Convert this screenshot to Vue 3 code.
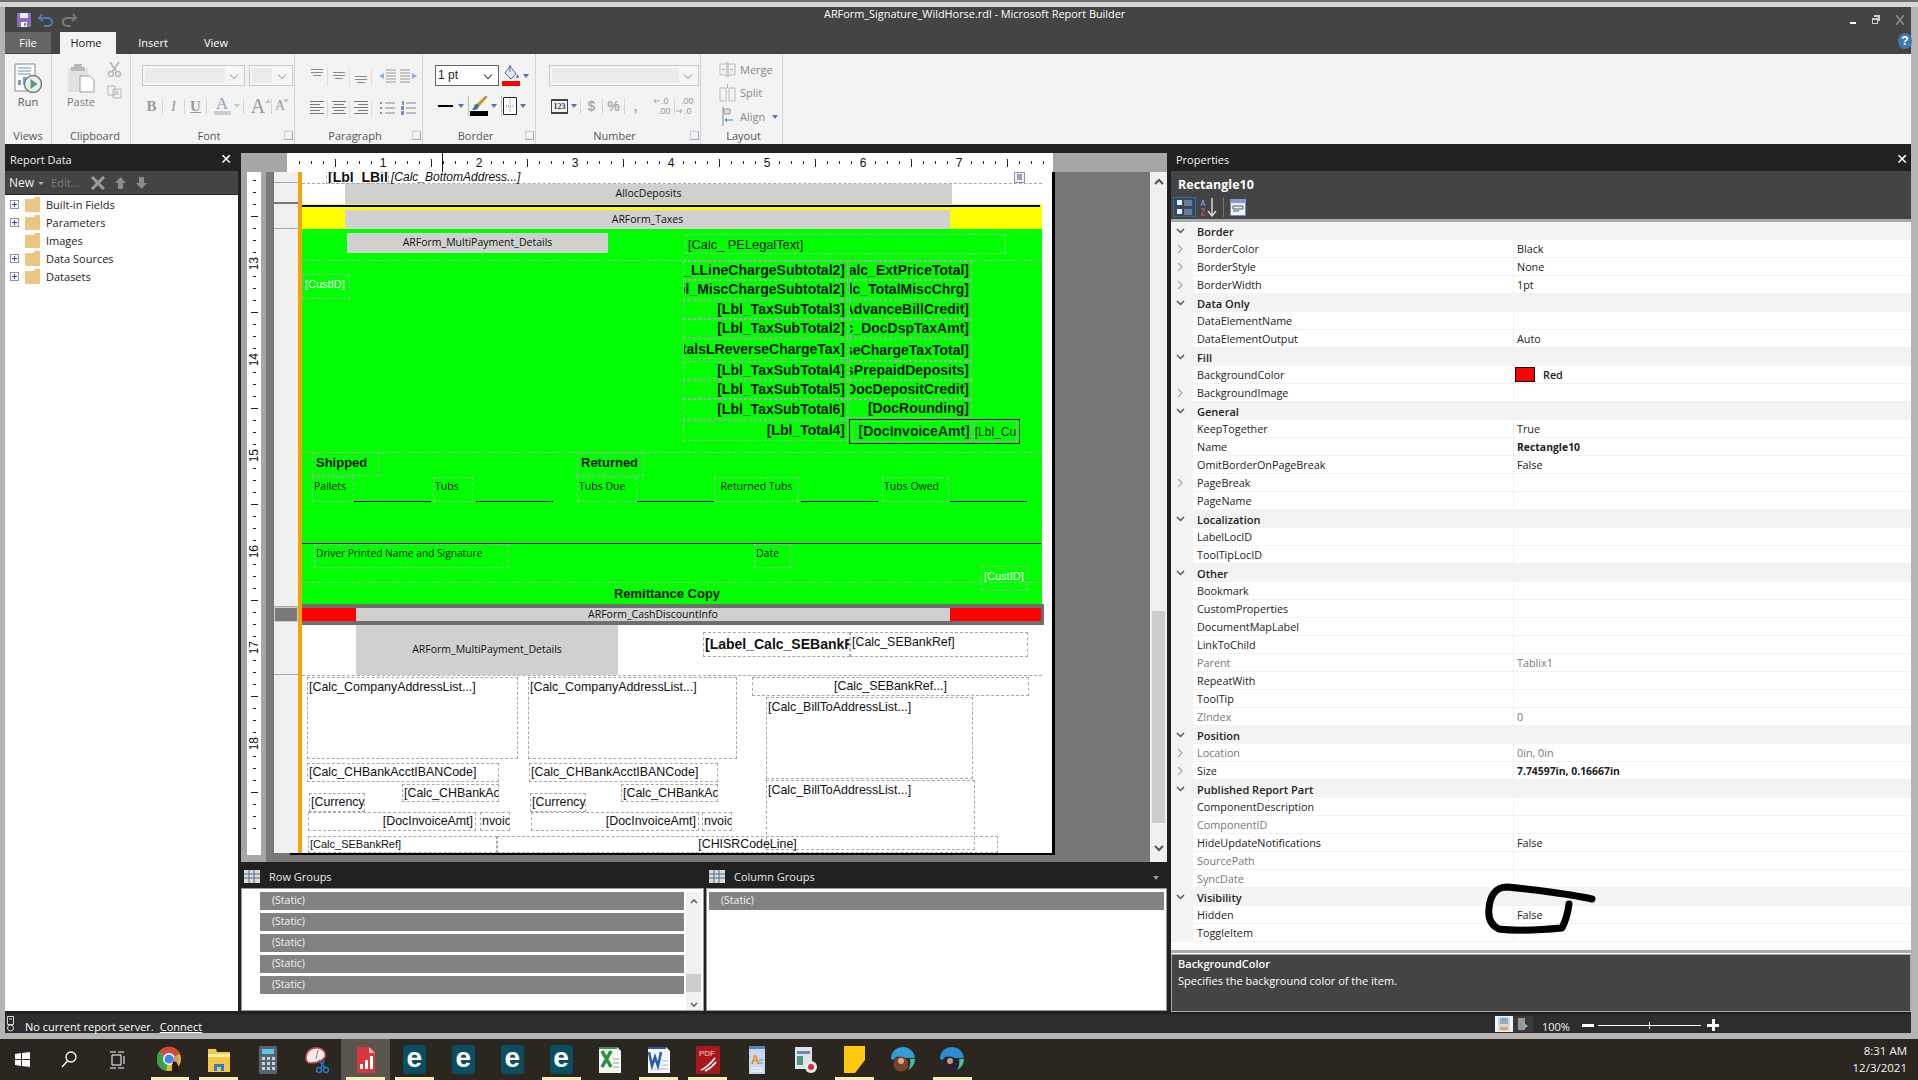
<script setup>
const ORIGIN_X = 302
const ORIGIN_Y = 172

const hTicks = Array.from({ length: 63 }, (_, i) => {
  const k = i + 1
  return { k, label: k % 8 === 0 ? k / 8 : '', long: k % 8 === 4 }
})
const vTicks = Array.from({ length: 56 }, (_, i) => {
  const k = i - 7
  const m = ((k % 8) + 8) % 8
  return { k, label: m === 0 && k < 48 ? 13 + k / 8 : '', long: m === 4, blank: k === 48 }
})

const at = (x, y, w, h) => ({
  left: x - ORIGIN_X + 'px',
  top: y - ORIGIN_Y + 'px',
  width: w + 'px',
  height: h + 'px'
})

const fills = [
  { x: 345, y: 184, w: 607, h: 20, cls: 'gray' },
  { x: 302, y: 204, w: 740, h: 25, cls: 'yellow' },
  { x: 302, y: 229, w: 740, h: 375, cls: 'green' },
  { x: 345, y: 210, w: 605, h: 19, cls: 'gray' },
  { x: 347, y: 233, w: 261, h: 20, cls: 'gray' },
  { x: 302, y: 604, w: 742, h: 21, cls: 'slate' },
  { x: 302, y: 608, w: 54, h: 13, cls: 'red' },
  { x: 356, y: 608, w: 594, h: 13, cls: 'gray' },
  { x: 950, y: 608, w: 91, h: 13, cls: 'red' },
  { x: 356, y: 625, w: 262, h: 50, cls: 'gray' }
]

const rules = [
  { x: 302, y: 205, w: 738, h: 2, cls: 'ink' },
  { x: 354, y: 501, w: 77, h: 1, cls: 'ink' },
  { x: 476, y: 501, w: 77, h: 1, cls: 'ink' },
  { x: 637, y: 501, w: 77, h: 1, cls: 'ink' },
  { x: 801, y: 501, w: 77, h: 1, cls: 'ink' },
  { x: 950, y: 501, w: 77, h: 1, cls: 'ink' },
  { x: 302, y: 543, w: 739, h: 1, cls: 'ink' },
  { x: 302, y: 183, w: 740, h: 0, cls: 'dash' },
  { x: 302, y: 260, w: 740, h: 0, cls: 'dash' },
  { x: 302, y: 452, w: 740, h: 0, cls: 'dash' },
  { x: 302, y: 582, w: 740, h: 0, cls: 'dash' },
  { x: 302, y: 675, w: 740, h: 0, cls: 'dash' }
]

const T = (x, y, w, h, text, cls = '') => ({ x, y, w, h, text, cls })
const boxes = [
  T(326, 170, 63, 14, '[Lbl_LBill', 'b13'),
  T(390, 170, 300, 14, '[Calc_BottomAddress...]', 'it13 noborder'),
  T(345, 184, 607, 20, 'AllocDeposits', 'seg c noborder'),
  T(345, 210, 605, 19, 'ARForm_Taxes', 'seg c noborder'),
  T(347, 233, 261, 20, 'ARForm_MultiPayment_Details', 'seg c noborder'),
  T(685, 234, 321, 20, '[Calc_ PELegalText]', 'r14'),
  T(302, 274, 48, 25, '[CustID]', 'wt'),
  T(683, 261, 165, 19, '[Lbl_LLineChargeSubtotal2]', 'b13 e'),
  T(683, 280, 165, 19, '[Lbl_MiscChargeSubtotal2]', 'b13 e'),
  T(683, 300, 165, 19, '[Lbl_TaxSubTotal3]', 'b13 e'),
  T(683, 319, 165, 19, '[Lbl_TaxSubTotal2]', 'b13 e'),
  T(683, 339, 165, 20, '[Lbl_TotalsLReverseChargeTax]', 'b13 e'),
  T(683, 361, 165, 18, '[Lbl_TaxSubTotal4]', 'b13 e'),
  T(683, 380, 165, 19, '[Lbl_TaxSubTotal5]', 'b13 e'),
  T(683, 399, 165, 20, '[Lbl_TaxSubTotal6]', 'b13 e'),
  T(683, 420, 165, 21, '[Lbl_Total4]', 'b13 e'),
  T(849, 261, 123, 19, '[Calc_ExtPriceTotal]', 'b13 e'),
  T(849, 280, 123, 19, '[Calc_TotalMiscChrg]', 'b13 e'),
  T(849, 300, 123, 19, '[Calc_AdvanceBillCredit]', 'b13 e'),
  T(849, 319, 123, 19, '[Calc_DocDspTaxAmt]', 'b13 e'),
  T(849, 339, 123, 22, '[Calc_ReverseChargeTaxTotal]', 'b13 e'),
  T(849, 361, 123, 19, '[Calc_LessPrepaidDeposits]', 'b13 e'),
  T(849, 380, 123, 19, '[Calc_DocDepositCredit]', 'b13 e'),
  T(849, 399, 123, 19, '[DocRounding]', 'b13 e'),
  T(312, 452, 67, 24, 'Shipped', 'b14'),
  T(577, 452, 67, 24, 'Returned', 'b14'),
  T(312, 477, 42, 25, 'Pallets', 'seg'),
  T(433, 477, 40, 25, 'Tubs', 'seg'),
  T(577, 477, 60, 25, 'Tubs Due', 'seg'),
  T(714, 477, 85, 25, 'Returned Tubs', 'seg c'),
  T(882, 477, 67, 25, 'Tubs Owed', 'seg'),
  T(314, 544, 195, 24, 'Driver Printed Name and Signature', 'seg narrow'),
  T(754, 544, 37, 24, 'Date', 'seg'),
  T(981, 566, 47, 25, '[CustID]', 'wt'),
  T(560, 583, 214, 20, 'Remittance Copy', 'b14 c noborder'),
  T(356, 608, 594, 13, 'ARForm_CashDiscountInfo', 'seg c noborder'),
  T(356, 625, 262, 50, 'ARForm_MultiPayment_Details', 'seg c noborder'),
  T(703, 632, 147, 25, '[Label_Calc_SEBankRef]', 'b13 clip'),
  T(850, 632, 178, 25, '[Calc_SEBankRef]', 'r12 up'),
  T(307, 677, 211, 82, '[Calc_CompanyAddressList...]', 'r12 top'),
  T(528, 677, 209, 82, '[Calc_CompanyAddressList...]', 'r12 top'),
  T(752, 677, 277, 19, '[Calc_SEBankRef...]', 'r12 c'),
  T(766, 697, 207, 82, '[Calc_BillToAddressList...]', 'r12 top'),
  T(766, 780, 209, 70, '[Calc_BillToAddressList...]', 'r12 top'),
  T(307, 763, 192, 19, '[Calc_CHBankAcctIBANCode]', 'r12'),
  T(529, 763, 189, 19, '[Calc_CHBankAcctIBANCode]', 'r12'),
  T(402, 784, 97, 18, '[Calc_CHBankAcctIBAN]', 'r12 clip'),
  T(621, 784, 97, 18, '[Calc_CHBankAcctIBAN]', 'r12 clip'),
  T(309, 793, 56, 19, '[Currency(', 'r12 clip'),
  T(530, 793, 56, 19, '[Currency', 'r12 clip'),
  T(308, 812, 168, 19, '[DocInvoiceAmt]', 'r12 e'),
  T(531, 812, 168, 19, '[DocInvoiceAmt]', 'r12 e'),
  T(480, 812, 30, 19, 'nvoic', 'r12 clip'),
  T(702, 812, 30, 19, 'nvoic', 'r12 clip'),
  T(308, 836, 189, 17, '[Calc_SEBankRef]', 'r11'),
  T(497, 836, 501, 17, '[CHISRCodeLine]', 'r12 c')
]

const props = [
  ['g', 'Border'], ['x', 'BorderColor', 'Black'], ['x', 'BorderStyle', 'None'], ['x', 'BorderWidth', '1pt'],
  ['g', 'Data Only'], ['n', 'DataElementName', ''], ['n', 'DataElementOutput', 'Auto'],
  ['g', 'Fill'], ['n', 'BackgroundColor', 'Red', 'swatch'], ['x', 'BackgroundImage', ''],
  ['g', 'General'], ['n', 'KeepTogether', 'True'], ['n', 'Name', 'Rectangle10', 'bold'], ['n', 'OmitBorderOnPageBreak', 'False'], ['x', 'PageBreak', ''], ['n', 'PageName', ''],
  ['g', 'Localization'], ['n', 'LabelLocID', ''], ['n', 'ToolTipLocID', ''],
  ['g', 'Other'], ['n', 'Bookmark', ''], ['n', 'CustomProperties', ''], ['n', 'DocumentMapLabel', ''], ['n', 'LinkToChild', ''], ['n', 'Parent', 'Tablix1', 'dim'], ['n', 'RepeatWith', ''], ['n', 'ToolTip', ''], ['n', 'ZIndex', '0', 'dim'],
  ['g', 'Position'], ['x', 'Location', '0in, 0in', 'dim'], ['x', 'Size', '7.74597in, 0.16667in', 'bold'],
  ['g', 'Published Report Part'], ['n', 'ComponentDescription', ''], ['n', 'ComponentID', '', 'dim'], ['n', 'HideUpdateNotifications', 'False'], ['n', 'SourcePath', '', 'dim'], ['n', 'SyncDate', '', 'dim'],
  ['g', 'Visibility'], ['n', 'Hidden', 'False'], ['n', 'ToggleItem', '']
]

const tree = [
  { label: 'Built-in Fields', plus: true },
  { label: 'Parameters', plus: true },
  { label: 'Images', plus: false },
  { label: 'Data Sources', plus: true },
  { label: 'Datasets', plus: true }
]

const paraTop = [
  [[1, 1, 12], [1, 4, 12], [3, 7, 8]],
  [[1, 4, 12], [1, 7, 12], [3, 10, 8]],
  [[1, 8, 12], [1, 11, 12], [3, 14, 8]]
]
const paraBottom = [
  [[0, 1, 14], [0, 4, 10], [0, 7, 14], [0, 10, 10], [0, 13, 14]],
  [[0, 1, 14], [2, 4, 10], [0, 7, 14], [2, 10, 10], [0, 13, 14]],
  [[0, 1, 14], [4, 4, 10], [0, 7, 14], [4, 10, 10], [0, 13, 14]]
]
</script>

<template>
  <div class="screen">
    <div class="edge-top"></div>
    <div class="window">
      <header class="title-area">
        <div class="qat">
          <svg class="qi" width="14" height="14" viewBox="0 0 14 14"><path d="M0 0h14v14H0z" fill="#8a6fc0"/><path d="M3 0h8v5H3z" fill="#efeaf7"/><path d="M4 9h6v5H4z" fill="#fff"/><path d="M7 10h2v3H7z" fill="#8a6fc0"/></svg>
          <svg class="qi" width="16" height="14" viewBox="0 0 16 14"><path d="M4 1 1 5l4 3M2 5h8a4 4 0 0 1 0 8H6" fill="none" stroke="#4a7fb8" stroke-width="2"/></svg>
          <svg class="qi" width="16" height="14" viewBox="0 0 16 14"><path d="M12 1l3 4-4 3M14 5H6a4 4 0 0 0 0 8h4" fill="none" stroke="#7a7a7a" stroke-width="2"/></svg>
          <span class="win-title">ARForm_Signature_WildHorse.rdl - Microsoft Report Builder</span>
          <span class="win-btns">
            <i class="min"></i>
            <svg width="8" height="9" viewBox="0 0 8 9"><path d="M2 0h6v6H6V2H2zM0 3h6v6H0z" fill="#ccc"/><path d="M1 5h4v3H1z" fill="#444"/></svg>
            <svg width="8" height="10" viewBox="0 0 8 10"><path d="M0 0l8 10M8 0 0 10" stroke="#8d8d8d" stroke-width="1.6"/></svg>
          </span>
        </div>
        <div class="tabs">
          <span class="tab file">File</span>
          <span class="tab home">Home</span>
          <span class="tab">Insert</span>
          <span class="tab">View</span>
          <span class="help">?</span>
        </div>
      </header>

      <section class="ribbon">
        <div class="rg" style="width:47px">
          <div class="rg-body big">
            <svg width="28" height="30" viewBox="0 0 28 30"><path d="M1 1h20v27H1z" fill="#fff" stroke="#7b8aa0"/><path d="M4 5h13M4 8h13M4 11h13" stroke="#6f8cb8"/><path d="M4 22v-5h3v5zM9 22v-8h3v8z" fill="#6fa0d8"/><circle cx="19" cy="21" r="8.5" fill="#e8efe9" stroke="#6d7d77" stroke-width="1.4"/><path d="M16.500 16v10l7-5z" fill="#4f9a85"/></svg>
            <span class="big-lab">Run</span>
          </div>
          <div class="rg-label">Views</div>
        </div>

        <div class="rg" style="width:79px">
          <div class="rg-body clip-body">
            <div class="big paste">
              <svg width="28" height="30" viewBox="0 0 28 30"><path d="M1 5h20v24H1z" fill="#e2e2e2"/><path d="M7 1h8v3h3v4H4V4h3z" fill="#b9b9b9"/><path d="M13 13h10l4 4v12H13z" fill="#fff" stroke="#9b9b9b"/></svg>
              <span class="big-lab">Paste</span>
            </div>
            <div class="clip-small">
              <svg width="15" height="16" viewBox="0 0 15 16"><path d="M3 1l7 10M12 1 5 11" stroke="#b5b5b5" stroke-width="1.6"/><circle cx="4" cy="13" r="2.500" fill="none" stroke="#b5b5b5" stroke-width="1.4"/><circle cx="11" cy="13" r="2.500" fill="none" stroke="#b5b5b5" stroke-width="1.4"/></svg>
              <svg width="15" height="14" viewBox="0 0 15 14"><path d="M1 1h7v9H1zM6 4h8v9H6z" fill="#f3f3f3" stroke="#b5b5b5"/><path d="M8 7h4M8 9h4" stroke="#b5b5b5"/></svg>
            </div>
          </div>
          <div class="rg-label clip-lab">Clipboard</div>
        </div>

        <div class="rg launch" style="width:164px">
          <div class="rg-body rows fontg">
            <div class="rrow">
              <span class="combo w103"><i class="inner w80"></i><i class="chev"></i></span>
              <span class="combo w44"><i class="inner w20"></i><i class="chev"></i></span>
            </div>
            <div class="rrow fbtns">
              <b class="fb serif">B</b><i class="sep"></i>
              <em class="fb serif">I</em><i class="sep"></i>
              <u class="fb serif">U</u><i class="sep"></i>
              <span class="fcolor serif">A<i></i></span><i class="drop g"></i><i class="sep"></i>
              <span class="fb big-a serif">A</span><i class="up-tri"></i><i class="sep"></i>
              <span class="fb small-a serif">A</span><i class="drop g tip"></i>
            </div>
          </div>
          <div class="rg-label">Font</div>
        </div>

        <div class="rg launch" style="width:128px">
          <div class="rg-body rows parag">
            <div class="rrow picons">
              <svg v-for="(ic, i) in paraTop" :key="'t' + i" width="22" height="18" viewBox="0 0 22 18"><rect v-for="(r, j) in ic" :key="j" :x="r[0] + 4" :y="r[1] + 0" :width="r[2]" height="1" fill="#8a8a8a"/><path d="M21.500 0v18" stroke="#ddd"/></svg>
              <svg class="pg" width="22" height="18" viewBox="0 0 22 18"><path d="M10 2h10M10 5h10M10 8h10M10 11h10M10 14h10" stroke="#999"/><path d="M8 5 3 8l5 3z" fill="#8fb0d6"/></svg>
              <svg width="22" height="18" viewBox="0 0 22 18"><path d="M2 2h10M2 5h10M2 8h10M2 11h10M2 14h10" stroke="#999"/><path d="M14 5l5 3-5 3z" fill="#8fb0d6"/></svg>
            </div>
            <div class="rrow picons">
              <svg v-for="(ic, i) in paraBottom" :key="'b' + i" width="22" height="18" viewBox="0 0 22 18"><rect v-for="(r, j) in ic" :key="j" :x="r[0] + 4" :y="r[1]" :width="r[2]" height="1" fill="#777"/><path d="M21.500 0v18" stroke="#ddd"/></svg>
              <svg class="pg" width="22" height="18" viewBox="0 0 22 18"><path d="M9 3h10M9 8h10M9 13h10" stroke="#888"/><path d="M4 2h2v2H4zM4 7h2v2H4zM4 12h2v2H4z" fill="#6f8fbd"/></svg>
              <svg width="22" height="18" viewBox="0 0 22 18"><path d="M8 3h10M8 8h10M8 13h10" stroke="#888"/><path d="M4 1h2v4H4zM3 6h3v4H3zM3 11h3v4H3z" fill="#6f8fbd"/></svg>
            </div>
          </div>
          <div class="rg-label">Paragraph</div>
        </div>

        <div class="rg launch" style="width:113px">
          <div class="rg-body rows borderg">
            <div class="rrow">
              <span class="combo active"><span class="pt">1 pt</span><i class="chev dark"></i></span>
              <svg class="fill-ic" width="18" height="21" viewBox="0 0 18 21"><path d="M8 1l6 8-5 5-6-6z" fill="#e8eef6" stroke="#3b6fa8"/><path d="M8 0v7" stroke="#3b6fa8"/><path d="M15 9c1.500 2 2 3 1.500 4h-2z" fill="#3b6fa8"/><path d="M0 16h18v5H0z" fill="#f00"/></svg>
              <i class="drop"></i>
            </div>
            <div class="rrow brow">
              <i class="bline"></i><i class="drop"></i><i class="sep tall"></i>
              <svg width="18" height="20" viewBox="0 0 18 20"><path d="M16 0 7 8l2 2 8-9z" fill="#e0a000" stroke="#7a6a20" stroke-width=".6"/><path d="M7 8c-2 0-3 1-3 3l-2 3c3 0 6 0 7-4z" fill="#3b6fa8"/><path d="M0 15h18v5H0z" fill="#000"/></svg>
              <i class="drop"></i><i class="sep tall"></i>
              <svg width="14" height="18" viewBox="0 0 14 18"><path d="M.5.500h13v17H.5z" fill="#fff" stroke="#222"/><path d="M7 2v14M3 9h8" stroke="#888" stroke-dasharray="1 1"/></svg>
              <i class="drop"></i>
            </div>
          </div>
          <div class="rg-label">Border</div>
        </div>

        <div class="rg launch" style="width:165px">
          <div class="rg-body rows numg">
            <div class="rrow"><span class="combo w150"><i class="inner w127"></i><i class="chev"></i></span></div>
            <div class="rrow nbtns">
              <span class="n123">123</span><i class="drop"></i><i class="sep"></i>
              <span class="nb">$</span><i class="sep"></i>
              <span class="nb">%</span><i class="sep"></i>
              <span class="nb comma">,</span>
              <svg width="22" height="20" viewBox="0 0 22 20"><text x="9" y="8" font-size="9" font-family="Liberation Sans" fill="#999">.0</text><text x="6" y="18" font-size="9" font-family="Liberation Sans" fill="#999">.00</text><path d="M8 5H2M4 3 2 5l2 2" stroke="#8fb0d6" fill="none"/></svg>
              <i class="sep"></i>
              <svg width="22" height="20" viewBox="0 0 22 20"><text x="6" y="8" font-size="9" font-family="Liberation Sans" fill="#999">.00</text><text x="9" y="18" font-size="9" font-family="Liberation Sans" fill="#999">.0</text><path d="M1 15h6M5 13l2 2-2 2" stroke="#8fb0d6" fill="none"/></svg>
            </div>
          </div>
          <div class="rg-label">Number</div>
        </div>

        <div class="rg" style="width:82px">
          <div class="rg-body layoutg">
            <div class="lrow"><svg width="17" height="17" viewBox="0 0 17 17"><path d="M1 3h15v11H1z" fill="none" stroke="#bbb"/><path d="M8.500 1v15" stroke="#ccc" stroke-width="3"/><path d="M3 8.500h3M14 8.500h-3" stroke="#aaa"/></svg><span>Merge</span></div>
            <div class="lrow"><svg width="17" height="19" viewBox="0 0 17 19"><path d="M1 5h6v13H1zM10 5h6v13h-6z" fill="none" stroke="#bbb"/><path d="M8.500 1v4" stroke="#aaa"/></svg><span>Split</span></div>
            <div class="lrow"><svg width="17" height="19" viewBox="0 0 17 19"><path d="M4 0v19" stroke="#888"/><path d="M5 2h6v5H5z" fill="#ddd" stroke="#999"/><path d="M14 13H6M8 11l-2 2 2 2" fill="none" stroke="#4a7fb8"/></svg><span>Align</span><i class="drop"></i></div>
          </div>
          <div class="rg-label shift-r">Layout</div>
        </div>
      </section>

      <main class="main">
        <aside class="left-panel">
          <div class="dock-head"><span>Report Data</span><b class="x">✕</b></div>
          <div class="left-tools">
            <span class="new">New</span><i class="mini-drop"></i><span class="edit">Edit...</span>
            <svg width="14" height="14" viewBox="0 0 14 14"><path d="M1 1l12 12M13 1 1 13" stroke="#9b9b9b" stroke-width="3"/></svg>
            <svg width="11" height="12" viewBox="0 0 11 12"><path d="M5.500 0 11 6H8v6H3V6H0z" fill="#8a8a8a"/></svg>
            <svg width="11" height="12" viewBox="0 0 11 12"><path d="M5.500 12 11 6H8V0H3v6H0z" fill="#8a8a8a"/></svg>
          </div>
          <ul class="tree">
            <li v-for="t in tree" :key="t.label">
              <span class="exp" :class="{ none: !t.plus }"></span>
              <svg width="15" height="15" viewBox="0 0 15 15"><path d="M0 2h9l1-2h5v15H0z" fill="#eac583"/></svg>
              <span class="tree-lab">{{ t.label }}</span>
            </li>
          </ul>
        </aside>

        <section class="center">
          <div class="hruler-band">
            <div class="hruler">
              <span v-for="t in hTicks" :key="t.k" class="ht" :class="{ long: t.long }">
                <b v-if="t.label">{{ t.label }}</b><i v-else></i>
              </span>
              <i class="cursor"></i>
            </div>
          </div>
          <div class="surface">
            <div class="v-gray1"></div>
            <div class="vruler">
              <span v-for="t in vTicks" :key="t.k" class="vt" :class="{ long: t.long, blank: t.blank }">
                <b v-if="t.label">{{ t.label }}</b><i v-else></i>
              </span>
            </div>
            <div class="v-gray2"></div>
            <div class="v-gray3"></div>
            <div class="sheet">
              <div class="sheet-top">
                <div class="handles">
                  <i class="h-row" style="height:11px"></i>
                  <i class="h-row strong" style="height:21px"></i>
                  <i class="h-row" style="height:25px"></i>
                  <i class="h-row" style="height:378px"></i>
                  <i class="h-row sel" style="height:15px"></i>
                  <i class="h-row" style="height:53px"></i>
                  <i class="h-row" style="height:178px;border-bottom:0"></i>
                </div>
                <div class="orange"></div>
                <div class="page">
                  <div v-for="(f, i) in fills" :key="'f' + i" class="fill" :class="f.cls" :style="at(f.x, f.y, f.w, f.h)"></div>
                  <div v-for="(r, i) in rules" :key="'r' + i" class="rule" :class="r.cls" :style="at(r.x, r.y, r.w, r.h)"></div>
                  <div v-for="(b, i) in boxes" :key="'b' + i" class="bx" :class="b.cls" :style="at(b.x, b.y, b.w, b.h)"><span>{{ b.text }}</span></div>
                  <div class="total-box" :style="at(849, 419, 171, 25)">
                    <div class="tb-amt"><span>[DocInvoiceAmt]</span></div>
                    <div class="tb-lbl"><span>[Lbl_Currency]</span></div>
                  </div>
                  <svg class="doc-ic" :style="at(1014, 172, 11, 11)" viewBox="0 0 11 11"><path d="M.5.5h10v10H.5z" fill="#eef" stroke="#8a93a8"/><path d="M3 3h5M3 5h5M3 7h5" stroke="#556"/></svg>
                </div>
                <div class="black-edge"></div>
              </div>
              <div class="sheet-bottom"></div>
            </div>
            <div class="vscroll">
              <svg width="10" height="7" viewBox="0 0 10 7"><path d="M1 6l4-4 4 4" fill="none" stroke="#555" stroke-width="2"/></svg>
              <div class="thumb"></div>
              <svg width="10" height="7" viewBox="0 0 10 7"><path d="M1 1l4 4 4-4" fill="none" stroke="#555" stroke-width="2"/></svg>
            </div>
          </div>
          <div class="groups-head">
            <div class="gh">
              <svg width="16" height="13" viewBox="0 0 16 13"><path d="M0 0h16v13H0z" fill="#d4dce6"/><path d="M0 4h16M0 8h16M5 0v13M10 0v13" stroke="#5c6874"/></svg>
              <span>Row Groups</span>
            </div>
            <div class="gh col">
              <svg width="16" height="13" viewBox="0 0 16 13"><path d="M0 0h16v13H0z" fill="#d4dce6"/><path d="M0 4h16M0 8h16M5 0v13M10 0v13" stroke="#5c6874"/></svg>
              <span>Column Groups</span>
              <i class="gh-drop"></i>
            </div>
          </div>
          <div class="groups-body">
            <div class="gpane rows-pane">
              <div class="gbars">
                <div v-for="n in 5" :key="n" class="gbar">(Static)</div>
              </div>
              <div class="gscroll">
                <svg width="8" height="6" viewBox="0 0 8 6"><path d="M1 5l3-3 3 3" fill="none" stroke="#666" stroke-width="1.600"/></svg>
                <div class="gthumb"></div>
                <svg width="8" height="6" viewBox="0 0 8 6"><path d="M1 1l3 3 3-3" fill="none" stroke="#666" stroke-width="1.600"/></svg>
              </div>
            </div>
            <div class="gpane cols-pane">
              <div class="gbar">(Static)</div>
            </div>
          </div>
        </section>

        <aside class="right-panel">
          <div class="dock-head"><span>Properties</span><b class="x">✕</b></div>
          <div class="prop-head">
            <div class="prop-name">Rectangle10</div>
            <div class="prop-tools">
              <span class="cat-on">
                <svg width="17" height="17" viewBox="0 0 17 17"><path d="M1 1h5v5H1zM1 10h5v5H1z" fill="#e8eef6"/><path d="M8 2h8M8 4h8M8 6h8M8 11h8M8 13h8M8 15h8" stroke="#aab" /></svg>
              </span>
              <svg width="17" height="19" viewBox="0 0 17 19"><path d="M1 8l2-6 2 6M2 6h2" fill="none" stroke="#6fa0e0"/><path d="M1 11h4l-4 6h4" fill="none" stroke="#d06060"/><path d="M12 0v17M8 13l4 5 4-5" fill="none" stroke="#ddd" stroke-width="1.400"/></svg>
              <i class="tool-sep"></i>
              <svg width="16" height="18" viewBox="0 0 16 18"><path d="M.5 1.500h15v16H.5z" fill="#eef2f8" stroke="#6f8fb8"/><path d="M0 1h16v4H0z" fill="#7a9cd0"/><path d="M3 8h10v3H3zM3 13h6" fill="none" stroke="#556"/></svg>
            </div>
          </div>
          <div class="prop-grid">
            <template v-for="p in props" :key="p[1]">
              <div v-if="p[0] === 'g'" class="row group">
                <span class="gut"><svg width="9" height="6" viewBox="0 0 9 6"><path d="M1 1l3.500 3.500L8 1" fill="none" stroke="#555" stroke-width="1.500"/></svg></span>
                <span class="gname">{{ p[1] }}</span>
              </div>
              <div v-else class="row">
                <span class="gut"><svg v-if="p[0] === 'x'" width="6" height="10" viewBox="0 0 6 10"><path d="M1 1l4 4-4 4" fill="none" stroke="#aaa" stroke-width="1.300"/></svg></span>
                <span class="pname" :class="{ dim: p[3] === 'dim' }">{{ p[1] }}</span>
                <span class="pval" :class="p[3]"><i v-if="p[3] === 'swatch'" class="swatch-box"></i>{{ p[2] }}</span>
              </div>
            </template>
            <svg class="scribble" width="120" height="60" viewBox="1480 880 120 60"><path d="M1592 899C1575 895 1530 889 1507 887C1495 887 1490 897 1489 908C1488 917 1490 925 1499 929C1515 931 1540 930 1562 928C1566 920 1568 912 1569 904" fill="none" stroke="#000" stroke-width="7" stroke-linecap="round" stroke-linejoin="round"/></svg>
          </div>
          <div class="desc">
            <div class="desc-t">BackgroundColor</div>
            <div class="desc-b">Specifies the background color of the item.</div>
          </div>
        </aside>
      </main>

      <footer class="status">
        <svg class="srv" width="9" height="16" viewBox="0 0 9 16"><path d="M1.500.5h6v8h-6z" fill="none" stroke="#ddd"/><path d="M3 3h3" stroke="#ddd"/><circle cx="4.500" cy="12" r="3" fill="none" stroke="#ddd"/></svg>
        <span class="s-txt">No current report server.</span>
        <span class="s-link">Connect</span>
        <span class="s-right">
          <span class="view-on"><svg width="12" height="14" viewBox="0 0 12 14"><path d="M0 0h12v14H0z" fill="#cfd8e6"/><path d="M2 2h8M2 4h8M2 6h8" stroke="#5a7aa8"/><path d="M2 10h8v3H2z" fill="#e8a050"/></svg></span>
          <span class="view-off"><svg width="12" height="14" viewBox="0 0 12 14"><path d="M1 1h7v12H1z" fill="#999"/><path d="M7 6l4 3-4 3z" fill="#7fb0d0"/></svg></span>
          <span class="zoom-pct">100%</span>
          <i class="z-minus"></i>
          <span class="z-track"><i></i></span>
          <span class="z-plus"></span>
        </span>
      </footer>
    </div>
    <div class="edge-bottom"></div>

    <nav class="taskbar">
      <span class="tb-sys" style="width:45px"><svg width="15" height="15" viewBox="0 0 15 15"><path d="M0 2l6-1v6H0zM7 1l8-1v7H7zM0 8h6v6l-6-1zM7 8h8v7l-8-1z" fill="#fff"/></svg></span>
      <span class="tb-sys" style="width:48px"><svg width="16" height="17" viewBox="0 0 16 17"><circle cx="10" cy="6" r="5" fill="none" stroke="#fff" stroke-width="1.300"/><path d="M6.500 10 1 16" stroke="#fff" stroke-width="1.300"/></svg></span>
      <span class="tb-sys" style="width:47px"><svg width="16" height="18" viewBox="0 0 16 18"><path d="M3 4h9v10H3z" fill="none" stroke="#fff"/><path d="M1 1h6M9 1h6M1 17h6M9 17h6M15 5v8" stroke="#fff"/></svg></span>
      <span class="tb-apps">
        <span class="app run"><svg width="26" height="28" viewBox="0 0 26 28"><circle cx="12" cy="13" r="12" fill="#e2b92d"/><path d="M12 13 2 6A12 12 0 0 1 23 8z" fill="#d2483a"/><path d="M12 13 2 6a12 12 0 0 0 7 19z" fill="#3d9e4d"/><circle cx="12" cy="13" r="6" fill="#fff"/><circle cx="12" cy="13" r="4.500" fill="#4285f4"/><path d="M16 27c-2-4-1-10 1-13 3 1 5 6 5 13z" fill="#2a1a14"/><circle cx="19" cy="13" r="3" fill="#c89878"/></svg></span>
        <span class="app run"><svg width="22" height="24" viewBox="0 0 22 24"><path d="M0 1h8l1 3h13v20H0z" fill="#f2c84b"/><path d="M0 6h22v3H0z" fill="#fbe9a8"/><path d="M6 23v-7h10v7z" fill="#2a7fd0"/><path d="M9 23v-4h4v4z" fill="#f2c84b"/></svg></span>
        <span class="app"><svg width="18" height="28" viewBox="0 0 18 28"><rect width="18" height="28" rx="2" fill="#5a6672"/><path d="M3 3h12v5H3z" fill="#5cc8e8"/><path d="M3 11h3v3H3zM8 11h3v3H8zM13 11h3v3h-3zM3 16h3v3H3zM8 16h3v3H8zM13 16h3v3h-3zM3 21h3v3H3zM8 21h3v3H8zM13 21h3v3h-3z" fill="#c8d0d8"/></svg></span>
        <span class="app"><svg width="26" height="28" viewBox="0 0 26 28"><path d="M2 12C2 5 8 1 14 2c6 1 8 5 7 9-3 4-8 6-14 6-3 0-5-2-5-5z" fill="#f4ecec" stroke="#c84a4a" stroke-width="1.600"/><path d="M14 4l-2 9" stroke="#888"/><path d="M15 14l6 8M20 14l-3 8" stroke="#2a78c8" stroke-width="1.500"/><circle cx="15" cy="24" r="2.500" fill="none" stroke="#2a78c8" stroke-width="1.500"/><circle cx="22" cy="24" r="2.500" fill="none" stroke="#2a78c8" stroke-width="1.500"/></svg></span>
        <span class="app active run"><svg width="18" height="26" viewBox="0 0 18 26"><path d="M0 0h12l6 6v20H0z" fill="#d9363e"/><path d="M12 0l6 6h-6z" fill="#f3b6b6"/><path d="M3 22v-5h3v5zM8 22V13h3v9zM13 22V9h3v13z" fill="#fff"/></svg></span>
        <span class="app run ebtn"><b>e</b></span>
        <span class="app ebtn"><b>e</b></span>
        <span class="app ebtn"><b>e</b></span>
        <span class="app run ebtn"><b>e</b></span>
        <span class="app"><svg width="22" height="26" viewBox="0 0 22 26"><path d="M0 0h18l4 4v22H0z" fill="#f4f6f2"/><path d="M0 0h18v2H0z" fill="#3f8f4f"/><path d="M3 4l9 16M12 4 3 20" stroke="#2d8f3f" stroke-width="3.500"/><path d="M14 12h6M14 16h6M14 20h6" stroke="#8ab894"/></svg></span>
        <span class="app run"><svg width="22" height="26" viewBox="0 0 22 26"><path d="M0 0h18l4 4v22H0z" fill="#f4f6fa"/><path d="M0 0h18v2H0z" fill="#2a5ab0"/><path d="M1 5l3 14 3-9 3 9 3-14" fill="none" stroke="#2a5ab0" stroke-width="2.500"/><path d="M14 14h6M14 18h6M6 22h14" stroke="#a8bce0"/></svg></span>
        <span class="app run"><svg width="24" height="28" viewBox="0 0 24 28"><rect width="24" height="28" rx="2" fill="#a8181c"/><text x="3" y="10" font-size="8" font-family="Liberation Sans" fill="#f8d8d8">PDF</text><path d="M5 24c5-2 10-7 14-12M9 25c4-2 8-5 11-9" stroke="#fff" stroke-width="1.600" fill="none"/></svg></span>
        <span class="app"><svg width="18" height="28" viewBox="0 0 18 28"><path d="M1 0h16v28H1z" fill="#c8d8ec"/><path d="M1 0h16v3H1z" fill="#5a84b8"/><text x="3" y="18" font-size="12" font-family="Liberation Sans" font-weight="bold" fill="#e09020">A</text><path d="M11 14h4M11 17h4" stroke="#6a8ab0"/><path d="M3 22h12M3 25h12" stroke="#fff"/></svg></span>
        <span class="app"><svg width="22" height="26" viewBox="0 0 22 26"><path d="M0 0h17v22H0z" fill="#dfe3e8"/><path d="M2 4h13v3H2z" fill="#6a8ab0"/><path d="M2 9h6v9H2z" fill="#4a9a7a"/><circle cx="16" cy="20" r="6" fill="#e8e8e8"/><circle cx="16" cy="20" r="3" fill="#c83030"/></svg></span>
        <span class="app run"><svg width="21" height="27" viewBox="0 0 21 27"><path d="M0 0h21v27H0z" fill="#ffc910"/><path d="M21 14v13H11z" fill="#2a2620"/></svg></span>
        <span class="app"><svg width="26" height="28" viewBox="0 0 26 28"><path d="M1 13C1 5 7 1 13 1s11 4 12 11H11c-3-3-6-1-7 2z" fill="#2ea0d8"/><path d="M25 13c0 5-3 9-7 11 2-3 3-7 2-11z" fill="#3cc49a"/><circle cx="11" cy="18" r="7.500" fill="#7a4030"/><circle cx="11" cy="15" r="3" fill="#d8a888"/></svg></span>
        <span class="app run"><svg width="26" height="28" viewBox="0 0 26 28"><path d="M1 13C1 5 7 1 13 1s11 4 12 11H11c-3-3-6-1-7 2z" fill="#2a8fd0"/><path d="M25 13c0 5-3 9-7 11 2-3 3-7 2-11z" fill="#3cc49a"/><circle cx="11" cy="18" r="7.500" fill="#2a2030"/><circle cx="11" cy="15" r="3" fill="#c89878"/></svg></span>
      </span>
      <span class="clock"><span>8:31 AM</span><span>12/3/2021</span></span>
    </nav>
  </div>
</template>

<style>
html, body { margin: 0; background: #b0b0b0; overflow: hidden; }
</style>

<style scoped>
* { box-sizing: border-box; }
.screen { width: 1918px; height: 1080px; display: flex; flex-direction: column; background: #b4b4b4; font-family: "Open Sans", "Liberation Sans", sans-serif; font-size: 11px; overflow: hidden; color: #222; }
.edge-top { height: 7px; border-top: 2px solid #6e6e6e; background: #d6d6d6; flex: none; }
.window { height: 1026px; margin: 0 7px 0 5px; background: #212121; display: flex; flex-direction: column; flex: none; }
.edge-bottom { height: 6px; flex: none; background: #b4b4b4; }

.title-area { height: 47px; background: #444; display: flex; flex-direction: column; flex: none; }
.qat { height: 25px; display: flex; align-items: center; padding-left: 12px; gap: 7px; position: relative; }
.qi { flex: none; margin-top: 1px; }
.win-title { position: absolute; left: 819px; top: 0; line-height: 14px; color: #fff; font-size: 10.9px; white-space: nowrap; }
.win-btns { margin-left: auto; display: flex; align-items: center; gap: 16px; padding-right: 7px; }
.win-btns .min { width: 6px; height: 2px; background: #fff; margin-top: 7px; display: block; }
.tabs { height: 22px; display: flex; align-items: flex-end; color: #fff; font-size: 11px; position: relative; }
.tab { display: block; width: 46px; height: 22px; line-height: 21px; text-align: center; }
.tab.file { background: #666; height: 21px; margin-bottom: 1px; margin-right: 9px; }
.tab.home { background: #f3f3f3; color: #222; width: 56px; margin-right: 14px; padding-right: 4px; }
.tab:nth-child(3) { width: 46px; margin-right: 17px; }
.help { position: absolute; right: -1px; top: 1px; width: 14px; height: 16px; border-radius: 50%; background: #3f78b0; color: #fff; font: bold 12px/16px "Liberation Sans", sans-serif; text-align: center; }

.ribbon { height: 90px; background: #f3f3f3; display: flex; flex: none; color: #666; }
.rg { height: 90px; border-right: 1px solid #d4d4d4; display: flex; flex-direction: column; position: relative; flex: none; }
.rg-body { height: 72px; flex: none; }
.rg-label { height: 18px; line-height: 20px; text-align: center; color: #555; font-size: 11px; }
.launch .rg-label { padding-right: 7px; }
.shift-r { padding-left: 4px; }
.clip-lab { padding-left: 8px; }
.launch::after { content: ""; position: absolute; right: 1px; bottom: 4px; width: 7px; height: 7px; border: 1px solid #8fa8c8; border-top-color: #ccc; border-left-color: #ccc; }
.big { display: flex; flex-direction: column; align-items: center; padding-top: 9px; }
.big-lab { line-height: 14px; margin-top: 2px; color: #555; }
.clip-body { display: flex; }
.paste { width: 55px; padding-left: 3px; }
.paste .big-lab { color: #777; margin-top: 2px; }
.clip-small { display: flex; flex-direction: column; gap: 8px; padding-top: 7px; }
.rows { display: flex; flex-direction: column; padding-top: 11px; gap: 10px; }
.rrow { display: flex; align-items: center; height: 21px; }
.fontg { padding-left: 11px; }
.fontg .rrow:first-child { gap: 4px; }
.combo { display: block; height: 21px; border: 1px solid #c8c8c8; background: #f6f6f6; position: relative; flex: none; }
.w103 { width: 103px; } .w44 { width: 44px; } .w150 { width: 150px; }
.inner { display: block; position: absolute; left: 2px; top: 2px; bottom: 2px; background: #ebebeb; }
.w80 { width: 80px; } .w20 { width: 20px; } .w127 { width: 127px; }
.chev { display: block; position: absolute; right: 7px; top: 6px; width: 6px; height: 6px; border-right: 1px solid #aaa; border-bottom: 1px solid #aaa; transform: rotate(45deg); }
.chev.dark { border-color: #444; }
.serif { font-family: "Liberation Serif", serif; }
.fbtns { color: #999; height: 20px; margin-left: -1px; }
.fb { display: block; flex: none; width: 21px; text-align: center; font-size: 15px; line-height: 20px; font-style: normal; color: #999; }
b.fb { font-weight: bold; }
em.fb { font-style: italic; }
u.fb { font-weight: bold; }
.sep { display: block; width: 1px; height: 15px; background: #d4d4d4; flex: none; }
.sep.tall { height: 20px; background: #bbb; margin: 0 1px; }
.fcolor { display: flex; flex: none; flex-direction: column; align-items: center; width: 18px; margin-left: 6px; font-size: 17px; line-height: 14px; color: #8aa2c8; }
.fcolor i { display: block; width: 17px; height: 4px; background: #ccc; }
.drop { display: block; width: 0; height: 0; border-left: 3px solid transparent; border-right: 3px solid transparent; border-top: 4px solid #4f79ad; margin: 0 3px; flex: none; }
.drop.g { border-top-color: #c0c8d4; }
.drop.tip { margin: -11px 0 0 -5px; }
.big-a { font-size: 20px; width: 18px; margin-left: 5px; }
.small-a { font-size: 14px; width: 16px; }
.up-tri { display: block; flex: none; width: 0; height: 0; border-left: 3px solid transparent; border-right: 3px solid transparent; border-bottom: 4px solid #c0c8d4; margin: -10px 0 0 -2px; }
.parag { padding-left: 11px; gap: 11px; padding-top: 12px; }
.picons svg { flex: none; }
.pg { margin-left: 4px; }
.borderg { padding-left: 12px; }
.active { width: 64px; background: #fff; border-color: #666; color: #222; }
.pt { display: block; font: 12px/19px "Liberation Sans", sans-serif; padding-left: 2px; }
.fill-ic { margin-left: 3px; flex: none; }
.brow { height: 20px; }
.bline { display: block; flex: none; width: 15px; height: 2px; background: #000; margin-left: 3px; margin-right: 2px; }
.numg { padding-left: 13px; }
.nbtns { color: #999; height: 20px; }
.nbtns svg { flex: none; }
.n123 { display: block; width: 17px; height: 15px; border: 1px solid #444; border-top-width: 2px; border-bottom-width: 2px; font: bold 8px/11px "Liberation Serif", serif; color: #333; text-align: center; margin-left: 2px; flex: none; }
.nb { display: block; flex: none; width: 21px; text-align: center; font: bold 14px/20px "Liberation Sans", sans-serif; color: #aaa; }
.comma { margin-right: 6px; }
.layoutg { padding: 7px 0 0 18px; display: flex; flex-direction: column; gap: 5px; }
.lrow { height: 19px; display: flex; align-items: center; gap: 4px; color: #888; }
.lrow svg { flex: none; }

.main { flex: 1; min-height: 0; display: flex; gap: 3px; padding-bottom: 3px; }
.left-panel { width: 233px; flex: none; display: flex; flex-direction: column; background: #fff; }
.dock-head { height: 27px; flex: none; background: #212121; color: #f0f0f0; display: flex; align-items: center; justify-content: space-between; padding: 3px 6px 0 5px; font-size: 11px; }
.right-panel .dock-head { padding-right: 3px; }
.dock-head .x { font: bold 14px "DejaVu Sans", sans-serif; color: #fff; }
.left-tools { height: 24px; background: #444; flex: none; display: flex; align-items: center; padding-left: 4px; color: #eee; border-bottom: 1px solid #2a2a2a; }
.new { font-size: 12px; }
.mini-drop { display: block; width: 0; height: 0; border-left: 3px solid transparent; border-right: 3px solid transparent; border-top: 3px solid #aaa; margin: 1px 7px 0 4px; }
.edit { color: #7e7e7e; margin-right: 12px; }
.left-tools svg { margin-right: 10px; flex: none; }
.tree { list-style: none; margin: 0; padding: 0 0 0 5px; flex: 1; }
.tree li { height: 18px; display: flex; align-items: center; }
.exp { display: block; width: 9px; height: 9px; border: 1px solid #8a94b0; margin-right: 6px; flex: none; position: relative; background: linear-gradient(#3a4a80, #3a4a80) center / 5px 1px no-repeat, linear-gradient(#3a4a80, #3a4a80) center / 1px 5px no-repeat; }
.exp.none { border: 0; background: none; }
.tree-lab { margin-left: 6px; color: #222; }

.center { width: 926px; flex: none; display: flex; flex-direction: column; }
.hruler-band { height: 28px; padding-top: 9px; flex: none; background: #212121; }
.hruler { height: 19px; background: #a6a6a6; padding-left: 46px; position: relative; display: flex; }
.hruler::before { content: ""; position: absolute; left: 46px; top: 0; bottom: 0; width: 766px; background: #fff; }
.ht { width: 12px; flex: none; position: relative; display: flex; align-items: center; justify-content: center; }
.hruler .ht:first-of-type { margin-left: 6px; }
.ht i { display: block; width: 1px; height: 3px; background: #222; }
.ht.long i { height: 8px; }
.ht b { font: 12px/12px "Liberation Sans", sans-serif; color: #111; }
.cursor { position: absolute; left: 201px; top: 0; height: 19px; width: 1px; background: #111; display: block; }

.surface { height: 690px; flex: none; display: flex; background: #777; }
.v-gray1 { width: 6px; background: #a6a6a6; flex: none; }
.vruler { width: 14px; background: #fff; flex: none; padding-top: 2px; height: 690px; overflow: hidden; border-bottom: 7px solid #a6a6a6; }
.vt { height: 12px; display: flex; align-items: center; justify-content: center; position: relative; }
.vt i { display: block; width: 3px; height: 1px; background: #222; }
.vt.long i { width: 7px; height: 1px; }
.vt.blank i { visibility: hidden; }
.vt b { font: 12px/12px "Liberation Sans", sans-serif; color: #111; writing-mode: vertical-rl; transform: rotate(180deg); white-space: nowrap; }
.v-gray2 { width: 5px; background: #a6a6a6; flex: none; }
.v-gray3 { width: 6px; background: #7a7a7a; flex: none; }
.sheet { width: 783px; flex: none; display: flex; flex-direction: column; }
.sheet-top { height: 681px; flex: none; display: flex; }
.sheet-bottom { height: 2px; background: #000; margin-left: 18px; margin-right: 0; }
.handles { width: 26px; flex: none; background: #f0f0f0; border-left: 2px solid #777; display: flex; flex-direction: column; }
.h-row { display: block; border-bottom: 1px solid #aaa; flex: none; }
.h-row.strong { border-bottom: 2px solid #777; }
.h-row.sel { background: #7a7a7a; border: 1px solid #cfcfcf; margin-left: 0; }
.orange { width: 4px; flex: none; background: #f0a30a; }
.page { width: 750px; flex: none; background: #fff; position: relative; overflow: hidden; }
.black-edge { width: 3px; flex: none; background: #000; }

.fill, .rule, .bx, .total-box, .doc-ic { position: absolute; }
.gray { background: #d0d0d0; }
.yellow { background: #ff0; }
.green { background: #0f0; }
.red { background: #f00; }
.slate { background: #6e6e6e; }
.ink { background: #000; }
.dash { border-top: 1px dashed #aaa; }
.bx { border: 1px dashed #a8a8a8; overflow: hidden; white-space: nowrap; display: flex; align-items: center; color: #111; padding: 0 1px; font-family: "Liberation Sans", sans-serif; }
.bx span { flex: none; }
.noborder { border: 0; }
.top { align-items: flex-start; padding-top: 2px; }
.up { align-items: flex-start; padding-top: 2px; }
.c { justify-content: center; }
.e { justify-content: flex-end; padding-right: 2px; }
.b13 { font: bold 14px/15px "Liberation Sans", sans-serif; }
.b14 { font: bold 13px/15px "Liberation Sans", sans-serif; padding-left: 3px; padding-bottom: 3px; }
.b14.noborder { padding: 0; }
.it13 { font: italic 12px/12px "Liberation Sans", sans-serif; }
.r14 { font: 12.8px/15px "Liberation Sans", sans-serif; padding-left: 2px; }
.r12 { font: 12.4px/14px "Liberation Sans", sans-serif; padding-bottom: 1px; }
.r12.top { padding-bottom: 0; }
.r11 { font: 11px/13px "Liberation Sans", sans-serif; }
.wt { color: #fff; font: 11px/13px "Liberation Sans", sans-serif; padding-left: 2px; padding-bottom: 4px; }
.seg { font: 10.5px/13px "Open Sans", sans-serif; padding-bottom: 6px; }
.narrow { font-size: 10.2px; }
.noborder.seg { padding-bottom: 1px; }
.clip { overflow: hidden; }
.total-box { border: 1px solid #000; display: flex; padding: 1px 2px; }
.tb-amt { width: 122px; border: 1px dashed #a8a8a8; overflow: hidden; display: flex; justify-content: flex-end; align-items: center; padding-right: 1px; font: bold 14px/15px "Liberation Sans", sans-serif; white-space: nowrap; }
.tb-lbl { width: 44px; margin-left: 2px; border: 1px dashed #a8a8a8; overflow: hidden; display: flex; align-items: center; font: 12px/14px "Liberation Sans", sans-serif; white-space: nowrap; }
.tb-lbl span { flex: none; }

.vscroll { width: 17px; margin-left: 95px; height: 690px; background: #f0f0f0; display: flex; flex-direction: column; align-items: center; padding-top: 6px; flex: none; }
.thumb { width: 13px; height: 212px; margin-top: 426px; background: #cdcdcd; }
.vscroll svg:last-child { margin-top: 22px; }

.groups-head { height: 26px; display: flex; flex: none; }
.gh { width: 465px; display: flex; align-items: center; gap: 9px; padding-left: 3px; color: #e8e8e8; flex: none; padding-top: 3px; }
.gh.col { width: 461px; position: relative; }
.gh-drop { display: block; position: absolute; right: 8px; top: 14px; border-left: 3px solid transparent; border-right: 3px solid transparent; border-top: 4px solid #999; }
.groups-body { height: 123px; flex: none; display: flex; gap: 2px; }
.gpane { background: #fff; border: 1px solid #999; flex: none; padding-top: 3px; }
.rows-pane { width: 463px; display: flex; padding-left: 18px; }
.cols-pane { width: 461px; padding-left: 2px; padding-right: 2px; }
.gbars { width: 424px; flex: none; display: flex; flex-direction: column; gap: 3px; }
.gbar { height: 18px; line-height: 17px; background: #828282; color: #f2f2f2; padding-left: 12px; font-size: 10.500px; }
.gscroll { width: 15px; margin-left: 2px; flex: none; background: #f0f0f0; display: flex; flex-direction: column; align-items: center; padding-top: 6px; height: 118px; }
.gthumb { width: 15px; height: 18px; background: #cdcdcd; margin-top: 70px; }
.gscroll svg:last-child { margin-top: 10px; }

.right-panel { width: 740px; flex: none; display: flex; flex-direction: column; margin-left: 1px; background: #fff; position: relative; }
.prop-head { height: 48px; flex: none; background: #444; border-bottom: 0; color: #fff; }
.prop-name { height: 26px; line-height: 27px; padding-left: 7px; font-size: 12.5px; font-weight: 700; }
.prop-tools { display: flex; align-items: center; gap: 4px; padding-left: 2px; height: 20px; }
.cat-on { display: flex; width: 23px; height: 20px; align-items: center; justify-content: center; background: #2d4a62; border: 1px solid #3f6a8c; }
.tool-sep { display: block; width: 1px; height: 20px; background: #777; margin: 0 2px; }
.prop-grid { flex: none; height: 734px; border-top: 3px solid #aaa; background: #fff; position: relative; padding-top: 0; border-bottom: 3px solid #aaa; font-size: 10.8px; }
.row { height: 18px; display: flex; align-items: center; border-bottom: 1px solid #f2f2f2; }
.row.group { background: #f3f3f3; font-weight: 600; border-bottom: 0; }
.gut { width: 22px; height: 18px; flex: none; background: #f3f3f3; display: flex; align-items: center; justify-content: center; padding-right: 4px; }
.gname { padding-left: 4px; font-weight: 600; color: #222; font-size: 11px; }
.pname { width: 320px; padding-left: 4px; flex: none; }
.pval { flex: 1; height: 18px; line-height: 18px; padding-left: 3px; border-left: 1px solid #f0f0f0; display: flex; align-items: center; }
.dim { color: #777; }
.bold { font-weight: 700; font-size: 10.4px; }
.swatch { font-weight: 600; padding-left: 1px; }
.swatch-box { display: block; width: 20px; height: 15px; background: #f00; border: 1px solid #000; margin-right: 8px; flex: none; }
.scribble { position: absolute; left: 309px; top: 658px; }
.desc { height: 58px; margin-top: 1px; background: #444; border: 1px solid #a8a8a8; color: #fff; padding: 1px 6px; flex: none; }
.desc-t { font-weight: 600; line-height: 16px; }
.desc-b { margin-top: 1px; line-height: 16px; }

.status { height: 19px; background: #2d2d2d; flex: none; display: flex; align-items: center; color: #fff; position: relative; padding: 5px 0 0 1px; }
.srv { flex: none; margin-right: 10px; margin-top: -5px; }
.s-link { margin-left: 6px; text-decoration: underline; }
.s-right { position: absolute; left: 1490px; top: 0; height: 19px; display: flex; align-items: center; }
.view-on { width: 18px; height: 16px; background: #f4f4f4; display: flex; align-items: center; justify-content: center; }
.view-off { width: 20px; height: 16px; background: #3a3a3a; display: flex; align-items: center; justify-content: center; }
.zoom-pct { margin-left: 9px; width: 40px; color: #eee; padding-top: 5px; }
.z-minus { display: block; width: 12px; height: 3px; background: #fff; margin-top: 3px; }
.z-track { display: block; width: 103px; height: 1px; background: #fff; margin-left: 4px; position: relative; margin-top: 3px; }
.z-track i { display: block; position: absolute; left: 51px; top: -3px; width: 1px; height: 7px; background: #fff; }
.z-plus { display: block; width: 12px; height: 12px; margin-left: 6px; margin-top: 3px; background: linear-gradient(#fff, #fff) center / 12px 3px no-repeat, linear-gradient(#fff, #fff) center / 3px 12px no-repeat; }

.taskbar { height: 41px; flex: none; background: #2b2720; display: flex; align-items: stretch; position: relative; color: #fff; }
.tb-sys { display: flex; align-items: center; justify-content: center; flex: none; }
.tb-apps { display: flex; padding-left: 5.5px; }
.app { width: 48.900px; display: flex; align-items: center; justify-content: center; position: relative; flex: none; }
.app.active { background: #5a554f; }
.app.run::after { content: ""; position: absolute; left: 5px; right: 5px; bottom: 0; height: 3px; background: #f6efbb; }
.ebtn b { display: block; width: 23px; height: 29px; border-radius: 3px; background: #0a4e62; color: #fff; font: bold 28px/25px "Liberation Sans", sans-serif; text-align: center; }
.clock { position: absolute; right: 11px; top: 0; height: 41px; display: flex; flex-direction: column; align-items: flex-end; justify-content: center; gap: 3px; font-size: 11.500px; line-height: 14px; color: #f4f4f4; }
</style>
